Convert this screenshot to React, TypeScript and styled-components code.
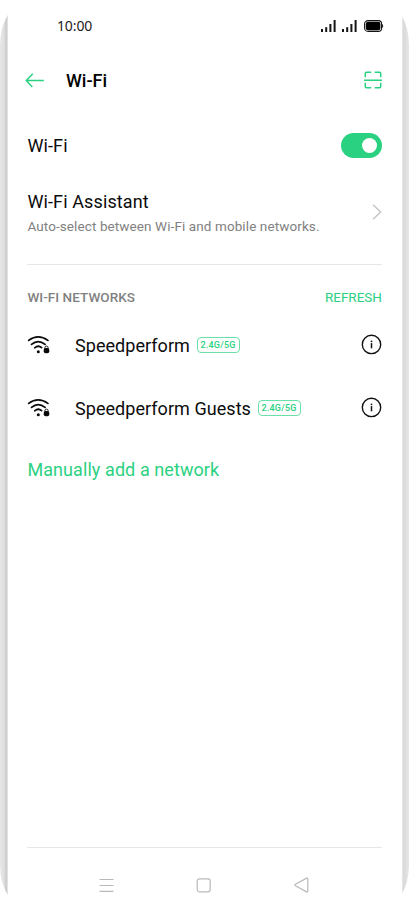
import React from "react";
import styled, { createGlobalStyle } from "styled-components";

const GREEN = "#2ad181";

const GlobalStyle = createGlobalStyle`
  * { box-sizing: border-box; }
  body { margin: 0; background: #fff; }
`;

const Device = styled.div`
  width: 409px;
  height: 910px;
  padding: 0 6px 0 8px;
  border-radius: 30px / 45px;
  background: linear-gradient(
    90deg,
    #e6e6e6 0, #e0e0e0 4px, #d6d6d6 5px, #cccccc 6px, #d0d0d0 7px, #f2f2f2 8px,
    #ffffff 9px, #ffffff 401px, #f1f1f1 402px, #d9d9d9 403px, #dddddd 405px, #e6e6e6 409px
  );
`;

const Screen = styled.main`
  display: flex;
  flex-direction: column;
  height: 100%;
  margin-right: 1px;
  padding: 0 20px 0 19.4px;
  background: #fff;
  font-family: Roboto, sans-serif;
  color: #0c0c0c;
`;

const StatusBar = styled.header`
  display: flex;
  align-items: center;
  justify-content: space-between;
  height: 52px;
  padding-left: 29.6px;
`;

const Time = styled.time`
  font: 14px/20px "Noto Sans", sans-serif;
  letter-spacing: -0.12px;
  color: #222;
`;

const StatusIcons = styled.div`
  display: flex;
  align-items: center;
  margin-right: -2px;
`;

const TitleBar = styled.div`
  display: flex;
  align-items: center;
  height: 56px;
  margin-left: -2px;
`;

const Title = styled.h1`
  flex: 1;
  margin: 0 0 0 20.6px;
  padding-top: 2px;
  font-size: 18px;
  line-height: 24px;
  font-weight: 500;
  color: #000;
`;

const SettingRow = styled.section<{ $height: number }>`
  display: flex;
  align-items: center;
  justify-content: space-between;
  height: ${(p) => p.$height}px;
`;

const Label = styled.span`
  font-size: 18px;
  line-height: 24px;
  letter-spacing: 0.12px;
`;

const ToggleLabel = styled(Label)`
  padding-top: 2px;
`;

const Stack = styled.div`
  display: flex;
  flex-direction: column;
  gap: 1px;
  padding-top: 3px;
`;

const Hint = styled.span`
  font-size: 13.5px;
  line-height: 23px;
  letter-spacing: 0.1px;
  color: #818181;
  white-space: nowrap;
`;

const Toggle = styled.button`
  display: flex;
  align-items: center;
  justify-content: flex-end;
  width: 41px;
  height: 25px;
  padding: 0 5px;
  border: 0;
  border-radius: 13px;
  background: ${GREEN};
`;

const Knob = styled.span`
  width: 15px;
  height: 15px;
  border-radius: 50%;
  background: #fff;
`;

const Divider = styled.hr<{ $top?: number }>`
  flex: none;
  width: 100%;
  height: 1px;
  margin: ${(p) => p.$top ?? 0}px 0 0;
  border: 0;
  background: #e6e6e6;
`;

const SectionHead = styled.div`
  display: flex;
  align-items: center;
  justify-content: space-between;
  height: 48px;
  padding-top: 15px;
  font-size: 13.5px;
  line-height: 18px;
`;

const SectionTitle = styled.h2`
  margin: 0;
  font-size: 13.5px;
  font-weight: 500;
  letter-spacing: 0.05px;
  color: #818181;
`;

const Refresh = styled.span`
  color: ${GREEN};
`;

const Network = styled.div`
  display: flex;
  align-items: center;
  height: 63px;
`;

const NetworkName = styled(Label)`
  margin-left: 24.6px;
  padding-top: 2px;
  letter-spacing: 0.05px;
`;

const Band = styled.span`
  display: flex;
  align-items: center;
  justify-content: center;
  width: 43px;
  height: 16px;
  margin: 1px auto 0 6.6px;
  border: 1px solid #6bdfa8;
  border-radius: 4px;
  font-size: 9px;
  font-weight: 500;
  letter-spacing: 0.22px;
  color: ${GREEN};
`;

const AddNetwork = styled.div`
  margin-top: 19px;
  font-size: 18px;
  line-height: 24px;
  letter-spacing: 0.08px;
  color: ${GREEN};
`;

const Spacer = styled.div`
  flex: 1;
`;

const NavBar = styled.nav`
  display: flex;
  align-items: center;
  justify-content: space-between;
  height: 62px;
  padding: 12px 73px 0 71.6px;
`;

const Signal = ({ gap }: { gap: number }) => (
  <svg width={15 + gap} height="12" viewBox={`0 0 ${15 + gap} 12`} fill="#151515">
    <rect x="0" y="9" width="2" height="3" />
    <rect x="4.2" y="7.2" width="2" height="4.8" />
    <rect x="8.4" y="4" width="2" height="8" />
    <rect x="12.6" y="0" width="2" height="12" />
  </svg>
);

const Battery = () => (
  <svg width="20" height="12" viewBox="0 0 20 12">
    <rect x="0.6" y="0.6" width="17" height="10.8" rx="3.4" fill="none" stroke="#111" strokeWidth="1.1" />
    <rect x="1.8" y="1.8" width="14.6" height="8.4" rx="2.2" fill="#000" />
    <path d="M18.1 4q1.1 .5 1.1 2t-1.1 2z" fill="#111" />
  </svg>
);

const BackArrow = () => (
  <svg width="20" height="16" viewBox="0 0 20 16" fill="none" stroke={GREEN} strokeWidth="1.5">
    <path d="M18.8 8.4H1.5M7.8 1.7 1.3 8.4l6 6.5" />
  </svg>
);

const ScanIcon = () => (
  <svg width="18" height="18" viewBox="0 0 18 18" fill="none" stroke={GREEN} strokeWidth="1.5">
    <path d="M1.3 6.2V2.3q0-1 1-1h4.9M10.8 1.3h4.9q1 0 1 1v3.9M1.3 11.8v3.9q0 1 1 1h4.9M10.8 16.7h4.9q1 0 1-1v-3.9M0 9.3h18" />
  </svg>
);

const Chevron = () => (
  <svg width="10" height="18" viewBox="0 0 10 18" fill="none" stroke="#c4c4c4" strokeWidth="1.4">
    <path d="m1 1.8 7.7 7.2L1 16.2" />
  </svg>
);

const WifiLock = () => (
  <svg width="23" height="20" viewBox="0 0 23 20" fill="none" stroke="#0a0a0a" strokeLinecap="round">
    <path d="M1.7 5.4Q11.1 -1.7 20.9 5.4" strokeWidth="1.7" />
    <path d="M4.5 9.4Q11.1 3.7 18.1 9.4" strokeWidth="1.7" />
    <path d="M7.7 12.8q3.6-3 6.9-.2" strokeWidth="1.7" />
    <circle cx="11.3" cy="16.7" r="1.5" fill="#0a0a0a" stroke="none" />
    <rect x="16.7" y="13" width="5.6" height="5.3" rx="2" fill="#0a0a0a" stroke="none" />
    <path d="M17.9 13.5v-.8a1.6 1.6 0 0 1 3.2 0v.8" strokeWidth="0.9" />
  </svg>
);

const InfoIcon = () => (
  <svg width="21" height="21" viewBox="0 0 21 21">
    <circle cx="10.5" cy="10.4" r="9.2" fill="none" stroke="#111" strokeWidth="1.4" />
    <circle cx="10.5" cy="7.3" r="0.9" fill="#111" />
    <path d="M10.5 9.1v5.2" stroke="#111" strokeWidth="1.5" />
  </svg>
);

const MenuIcon = () => (
  <svg width="15" height="15" viewBox="0 0 15 15" stroke="#b9b9b9" strokeWidth="1.2">
    <path d="M.5 1.5h14M.5 7.5h14M.5 13.3h14" />
  </svg>
);

const HomeIcon = () => (
  <svg width="15" height="15" viewBox="0 0 15 15" fill="none" stroke="#b9b9b9" strokeWidth="1.2">
    <rect x="1.2" y="0.8" width="13" height="13" rx="2.3" />
  </svg>
);

const TriangleIcon = () => (
  <svg width="15" height="16" viewBox="0 0 15 16" fill="none" stroke="#b9b9b9" strokeWidth="1.2" strokeLinejoin="round">
    <path d="M12.7 1.1 1.4 7.3q-1 .7 0 1.4l11.3 6.2q1.1.4 1.1-.8V1.9q0-1.2-1.1-.8z" />
  </svg>
);

const networks = ["Speedperform", "Speedperform Guests"];

export default function App() {
  return (
    <>
      <GlobalStyle />
      <Device>
        <Screen>
          <StatusBar>
            <Time>10:00</Time>
            <StatusIcons>
              <Signal gap={6} />
              <Signal gap={7} />
              <Battery />
            </StatusIcons>
          </StatusBar>
          <TitleBar>
            <BackArrow />
            <Title>Wi-Fi</Title>
            <ScanIcon />
          </TitleBar>
          <SettingRow $height={74}>
            <ToggleLabel>Wi-Fi</ToggleLabel>
            <Toggle aria-label="Wi-Fi">
              <Knob />
            </Toggle>
          </SettingRow>
          <SettingRow $height={60}>
            <Stack>
              <Label>Wi-Fi Assistant</Label>
              <Hint>Auto-select between Wi-Fi and mobile networks.</Hint>
            </Stack>
            <Chevron />
          </SettingRow>
          <Divider $top={22} />
          <SectionHead>
            <SectionTitle>WI-FI NETWORKS</SectionTitle>
            <Refresh>REFRESH</Refresh>
          </SectionHead>
          {networks.map((name) => (
            <Network key={name}>
              <WifiLock />
              <NetworkName>{name}</NetworkName>
              <Band>2.4G/5G</Band>
              <InfoIcon />
            </Network>
          ))}
          <AddNetwork>Manually add a network</AddNetwork>
          <Spacer />
          <Divider />
          <NavBar>
            <MenuIcon />
            <HomeIcon />
            <TriangleIcon />
          </NavBar>
        </Screen>
      </Device>
    </>
  );
}
